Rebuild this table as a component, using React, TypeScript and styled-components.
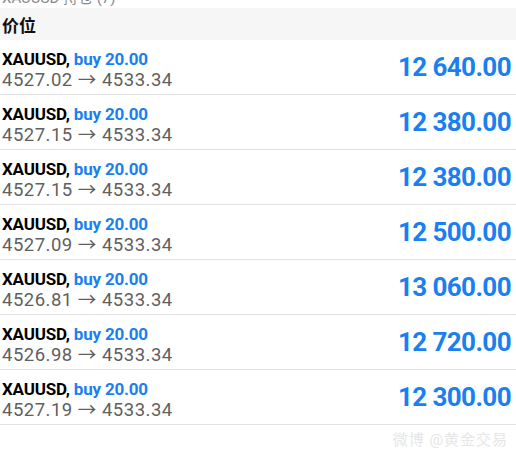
import React from "react";
import styled, { createGlobalStyle } from "styled-components";

const GlobalStyle = createGlobalStyle`
  html, body {
    margin: 0;
    padding: 0;
    background: #ffffff;
  }
  body {
    font-family: Roboto, "Noto Sans CJK SC", sans-serif;
    width: 516px;
    height: 452px;
    overflow: hidden;
  }
`;

const Page = styled.div`
  display: flex;
  flex-direction: column;
  width: 516px;
`;

const CutTitle = styled.div`
  height: 8px;
  overflow: hidden;
  padding-left: 2px;

  span {
    display: block;
    margin-top: -9px;
    font-size: 15px;
    line-height: 15px;
    color: #8a8a8a;
  }
`;

const SectionHeader = styled.div`
  height: 32px;
  display: flex;
  align-items: center;
  padding-left: 2px;
  background: #f6f6f6;
  color: #111111;
  font-family: "Noto Sans CJK SC", sans-serif;
  font-weight: 700;
  font-size: 17px;
`;

const Row = styled.div`
  height: 54px;
  display: flex;
  align-items: center;
  justify-content: space-between;
  padding: 0 5px 0 2px;
  border-bottom: 1px solid #e2e2e2;
`;

const Info = styled.div`
  display: flex;
  flex-direction: column;
  padding-top: 5px;
`;

const Title = styled.div`
  font-size: 17px;
  line-height: 20px;
  font-weight: 700;
  letter-spacing: -0.2px;
  color: #000000;

  .side {
    color: #1a7fef;
  }
`;

const Prices = styled.div`
  font-size: 18.5px;
  line-height: 22px;
  color: #5f5f5f;
  letter-spacing: 0.5px;
`;

const Profit = styled.div`
  font-size: 26px;
  font-weight: 700;
  letter-spacing: -0.6px;
  color: #1a7fef;
`;

const Watermark = styled.div`
  display: flex;
  justify-content: flex-end;
  padding: 3px 8px 0 0;
  font-size: 15px;
  color: #e6e6e6;
  letter-spacing: 1px;
`;

type Deal = {
  open: string;
  close: string;
  profit: string;
};

const deals: Deal[] = [
  { open: "4527.02", close: "4533.34", profit: "12 640.00" },
  { open: "4527.15", close: "4533.34", profit: "12 380.00" },
  { open: "4527.15", close: "4533.34", profit: "12 380.00" },
  { open: "4527.09", close: "4533.34", profit: "12 500.00" },
  { open: "4526.81", close: "4533.34", profit: "13 060.00" },
  { open: "4526.98", close: "4533.34", profit: "12 720.00" },
  { open: "4527.19", close: "4533.34", profit: "12 300.00" },
];

const App = () => {
  return (
    <Page>
      <GlobalStyle />
      <CutTitle>
        <span>XAUUSD 持仓 (7)</span>
      </CutTitle>
      <SectionHeader>价位</SectionHeader>
      {deals.map((d, i) => (
        <Row key={i}>
          <Info>
            <Title>
              XAUUSD, <span className="side">buy 20.00</span>
            </Title>
            <Prices>
              {d.open} → {d.close}
            </Prices>
          </Info>
          <Profit>{d.profit}</Profit>
        </Row>
      ))}
      <Watermark>微博 @黄金交易</Watermark>
    </Page>
  );
};

export default App;
